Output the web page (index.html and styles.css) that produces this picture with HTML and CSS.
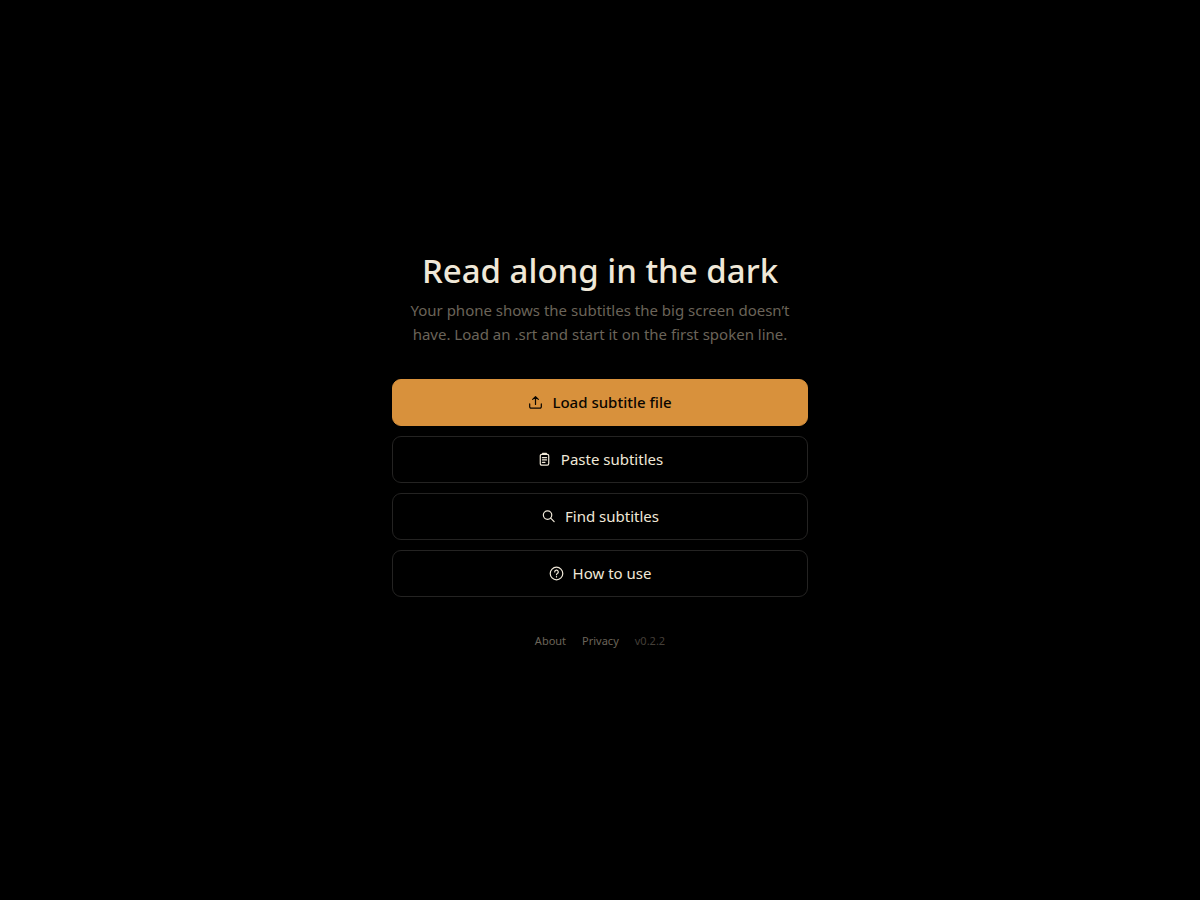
FILE: index.html
```html
<!DOCTYPE html>
<html lang="en" dir="ltr">
<head>
  <title>Read along in the dark</title>
  <meta charset="UTF-8">
  <meta name="viewport" content="width=device-width, initial-scale=1, viewport-fit=cover">
  <link rel="stylesheet" href="styles.css">
</head>
<body>
  <main class="home">
    <header class="intro">
      <h1>Read along in the dark</h1>
      <p>Your phone shows the subtitles the big screen doesn’t have. Load an .srt and start it on the first spoken line.</p>
    </header>
    <div class="actions">
      <button type="button" class="btn btn-primary">
        <svg class="icon" viewBox="0 0 16 16" aria-hidden="true">
          <path d="M8 10V2M5 4.7 8 1.7l3 3M1.8 9.5v3a1.5 1.5 0 0 0 1.5 1.5h9.4a1.5 1.5 0 0 0 1.5-1.5v-3" />
        </svg>
        Load subtitle file
      </button>
      <button type="button" class="btn">
        <svg class="icon" viewBox="0 0 16 16" aria-hidden="true">
          <rect x="3.5" y="2.5" width="9" height="11.5" rx="1.5" />
          <path d="M6 2.5v-1h4v1M5.8 6h4.4M5.8 8.5h4.4M5.8 11h2.7" />
        </svg>
        Paste subtitles
      </button>
      <button type="button" class="btn">
        <svg class="icon" viewBox="0 0 16 16" aria-hidden="true">
          <circle cx="7" cy="6.5" r="4.5" />
          <path d="m10.3 9.8 3.7 3.7" />
        </svg>
        Find subtitles
      </button>
      <button type="button" class="btn">
        <svg class="icon" viewBox="0 0 16 16" aria-hidden="true">
          <circle cx="8" cy="8" r="6.7" />
          <path d="M6.1 6.3a1.9 1.9 0 1 1 2.8 1.7c-.6.3-.9.6-.9 1.2M8 11.2v.4" />
        </svg>
        How to use
      </button>
    </div>
    <footer class="links">
      <a href="#about">About</a>
      <a href="#privacy">Privacy</a>
      <span class="version">v0.2.2</span>
    </footer>
  </main>
</body>
</html>
```
FILE: styles.css
```css
* {
  box-sizing: border-box;
}
body {
  --accent: #D8913C;
  --line: #242322;
  --muted: #6B6459;
  --text: #F0E8D8;
  background-color: #000;
  color: var(--text);
  font-family: "Noto Sans", sans-serif;
  margin: 0;
}
.home {
  display: flex;
  flex-direction: column;
  justify-content: center;
  margin: 0 auto;
  max-width: 464px;
  min-height: 100vh;
  padding: 24px;
}
.intro {
  margin-bottom: 33px;
  text-align: center;
}
h1 {
  font-size: 33px;
  font-weight: 500;
  line-height: 40px;
  margin: 0 0 7px;
}
.intro p {
  color: var(--muted);
  font-size: 15px;
  line-height: 24px;
  margin: 0;
}

/* ACTIONS */
.actions {
  display: grid;
  gap: 10px;
}
.btn {
  align-items: center;
  background-color: #000;
  border: 1px solid var(--line);
  border-radius: 9px;
  color: var(--text);
  cursor: pointer;
  display: flex;
  font: inherit;
  font-size: 15px;
  gap: 9px;
  justify-content: center;
  line-height: 21px;
  padding: 12px 16px;
}
.btn-primary {
  background-color: var(--accent);
  border-color: var(--accent);
  color: #0A0600;
  font-weight: 500;
}
.icon {
  fill: none;
  height: 15px;
  stroke: currentColor;
  stroke-linecap: round;
  stroke-linejoin: round;
  stroke-width: 1.3;
  width: 15px;
}

/* FOOTER */
.links {
  display: flex;
  font-size: 11px;
  gap: 16px;
  justify-content: center;
  line-height: 16px;
  margin-top: 36px;
}
.links a {
  color: var(--muted);
  text-decoration: none;
}
.version {
  color: #443F38;
}
```
